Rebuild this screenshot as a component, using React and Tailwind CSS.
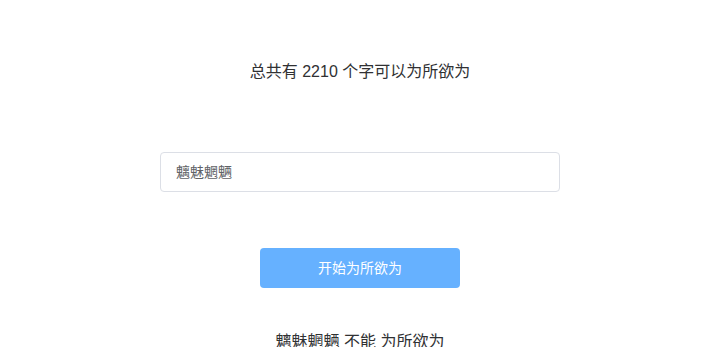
export default function App() {
  return (
    <div className="min-h-screen bg-white flex flex-col items-center pt-[60px] pl-[2px]" style={{ fontFamily: '"Liberation Sans", "Noto Sans CJK SC", sans-serif' }}>
      <div className="h-6 leading-6 text-base text-[#303133]">总共有 2210 个字可以为所欲为</div>
      <div className="mt-[68px] w-[400px] h-10 border border-[#dcdfe6] rounded flex items-center px-[15px] text-sm text-[#606266]">
        魑魅魍魉
      </div>
      <button className="mt-[56px] w-[200px] h-10 rounded bg-[#66b1ff] text-white text-sm">开始为所欲为</button>
      <div className="mt-[42px] h-6 leading-6 text-base text-[#303133]">魑魅魍魉 不能 为所欲为</div>
    </div>
  );
}
